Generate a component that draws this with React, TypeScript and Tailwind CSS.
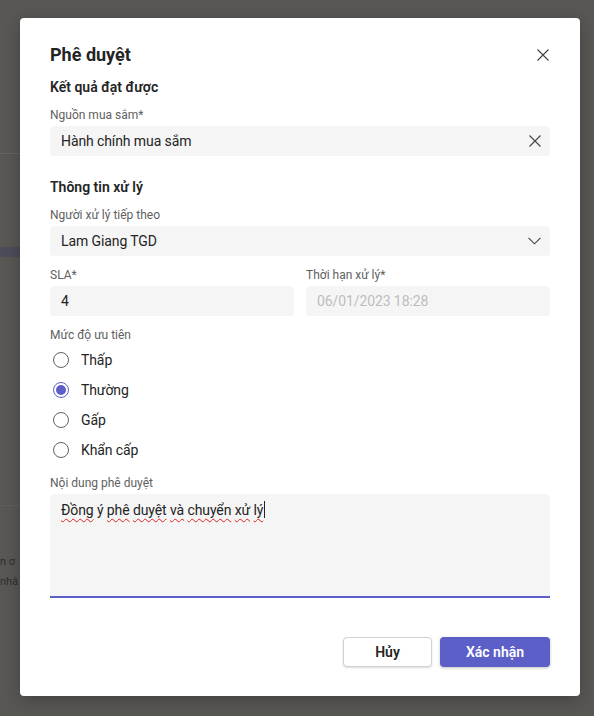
import React from "react";

function XIcon({ size = 12, color = "#424242" }: { size?: number; color?: string }) {
  return (
    <svg width={size} height={size} viewBox="0 0 12 12" fill="none">
      <path d="M0.5 0.5 L11.5 11.5 M11.5 0.5 L0.5 11.5" stroke={color} strokeWidth="1.1" />
    </svg>
  );
}

function Chevron() {
  return (
    <svg width="13" height="8" viewBox="0 0 13 8" fill="none">
      <path d="M0.5 0.8 L6.5 6.8 L12.5 0.8" stroke="#424242" strokeWidth="1.1" />
    </svg>
  );
}

function Radio({ label, checked }: { label: string; checked?: boolean }) {
  return (
    <div className="flex h-[30px] items-center">
      <div className="ml-[3px] flex h-[16px] w-[16px] items-center justify-center">
        {checked ? (
          <div className="flex h-[16px] w-[16px] items-center justify-center rounded-full border border-[#5b5fc7]">
            <div className="h-[10px] w-[10px] rounded-full bg-[#5b5fc7]" />
          </div>
        ) : (
          <div className="h-[16px] w-[16px] rounded-full border border-[#616161]" />
        )}
      </div>
      <span className="ml-[12px] text-[14px] leading-[20px] tracking-[-0.1px] text-[#242424]">{label}</span>
    </div>
  );
}

function Label({ children, className = "" }: { children: React.ReactNode; className?: string }) {
  return <div className={`text-[12px] leading-[20px] text-[#616161] ${className}`}>{children}</div>;
}

const wavy = "underline decoration-wavy decoration-[#e02020] decoration-1 underline-offset-[3px]";

export default function App() {
  return (
    <div className="relative h-[716px] w-[594px] overflow-hidden bg-[#585754] font-['Roboto',sans-serif]">
      {/* dimmed underlying page bits */}
      <div className="absolute left-0 top-[153px] h-px w-[20px] bg-[#66655f]" />
      <div className="absolute left-0 top-[247px] h-[10px] w-[20px] bg-[#4c4c5a]" />
      <div className="absolute left-0 top-[505px] h-px w-[20px] bg-[#5f5e5b]" />
      <div className="absolute left-0 top-[552px] text-[11px] leading-[20px] text-[#2e2e2e]">n ơ</div>
      <div className="absolute left-0 top-[572px] text-[11px] leading-[20px] text-[#2e2e2e]">nhâ</div>

      <div className="relative ml-[20px] mt-[18px] h-[678px] w-[560px] rounded-[4px] bg-white px-[30px] pt-[25px] shadow-[0_4px_16px_rgba(0,0,0,0.25)]">
        <div className="flex h-[24px] items-center justify-between">
          <div className="text-[18px] font-bold leading-[24px] text-[#242424]">Phê duyệt</div>
          <div className="mr-[1px]">
            <XIcon size={12} />
          </div>
        </div>

        <div className="mt-[10px] text-[14px] font-semibold leading-[20px] text-[#242424]">Kết quả đạt được</div>
        <Label className="mt-[8px]">Nguồn mua sắm*</Label>
        <div className="mt-[1px] flex h-[30px] items-center justify-between rounded-[4px] bg-[#f5f5f5] pl-[11px] pr-[9px]">
          <span className="text-[14px] leading-[20px] tracking-[-0.1px] text-[#242424]">Hành chính mua sắm</span>
          <XIcon size={12} />
        </div>

        <div className="mt-[21px] text-[14px] font-semibold leading-[20px] text-[#242424]">Thông tin xử lý</div>
        <Label className="mt-[8px]">Người xử lý tiếp theo</Label>
        <div className="mt-[1px] flex h-[30px] items-center justify-between rounded-[4px] bg-[#f5f5f5] pl-[11px] pr-[9px]">
          <span className="text-[14px] leading-[20px] tracking-[-0.1px] text-[#242424]">Lam Giang TGD</span>
          <Chevron />
        </div>

        <div className="mt-[9px] grid grid-cols-2 gap-x-[12px]">
          <div>
            <Label>SLA*</Label>
            <div className="mt-[1px] flex h-[30px] items-center rounded-[4px] bg-[#f5f5f5] pl-[11px]">
              <span className="text-[14px] leading-[20px] text-[#242424]">4</span>
            </div>
          </div>
          <div>
            <Label>Thời hạn xử lý*</Label>
            <div className="mt-[1px] flex h-[30px] items-center rounded-[4px] bg-[#f5f5f5] pl-[11px]">
              <span className="text-[14px] leading-[20px] tracking-[-0.1px] text-[#bdbdbd]">06/01/2023 18:28</span>
            </div>
          </div>
        </div>

        <Label className="mt-[9px]">Mức độ ưu tiên</Label>
        <div className="flex flex-col">
          <Radio label="Thấp" />
          <Radio label="Thường" checked />
          <Radio label="Gấp" />
          <Radio label="Khẩn cấp" />
        </div>

        <Label className="mt-[8px]">Nội dung phê duyệt</Label>
        <div className="mt-[1px] h-[104px] rounded-t-[4px] border-b-2 border-[#5b5fc7] bg-[#f5f5f5] pl-[11px] pt-[4px]">
          <span className="text-[14px] leading-[20px] tracking-[-0.1px] text-[#242424]">
            <span className={wavy}>Đồng</span> ý <span className={wavy}>phê</span>{" "}
            <span className={wavy}>duyệt</span> <span className={wavy}>và</span>{" "}
            <span className={wavy}>chuyển</span> <span className={wavy}>xử</span>{" "}
            <span className={wavy}>lý</span>
            <span className="ml-px inline-block h-[17px] w-px translate-y-[3px] bg-[#242424]" />
          </span>
        </div>

        <div className="mt-[39px] flex justify-end gap-[8px]">
          <button className="h-[30px] w-[89px] rounded-[4px] border border-[#d1d1d1] bg-white text-[14px] font-semibold text-[#242424] shadow-[0_1px_2px_rgba(0,0,0,0.14)]">
            Hủy
          </button>
          <button className="h-[30px] w-[110px] rounded-[4px] bg-[#5b5fc7] text-[14px] font-semibold text-white shadow-[0_1px_3px_rgba(0,0,0,0.25)]">
            Xác nhận
          </button>
        </div>
      </div>
    </div>
  );
}
